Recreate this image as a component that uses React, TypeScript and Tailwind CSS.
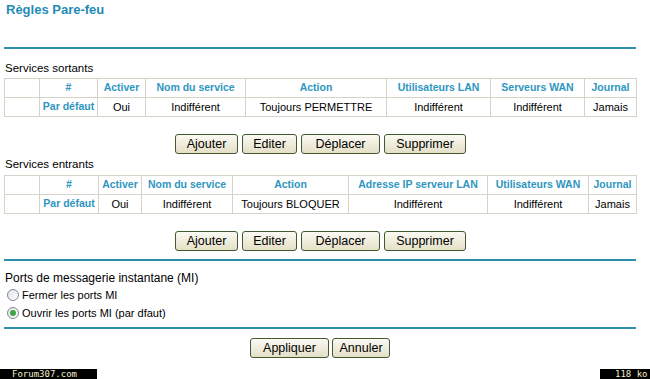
import React from "react"

const teal = "text-[#2e96bf]"

const Btn = ({ label, w }: { label: string; w: string }) => (
  <button
    className={`${w} h-[20px] rounded-[3px] border border-[#43592f] bg-gradient-to-b from-[#fbfaf3] to-[#e4dfc6] text-[12.5px] leading-[18px] text-black`}
  >
    {label}
  </button>
)

const ActionButtons = () => (
  <div className="flex justify-center gap-[4px] w-[632px] mx-[4px] pl-[1px]">
    <Btn label="Ajouter" w="w-[63px]" />
    <Btn label="Editer" w="w-[55px]" />
    <Btn label="Déplacer" w="w-[79px]" />
    <Btn label="Supprimer" w="w-[82px]" />
  </div>
)

type Col = { label: string; w: number }

const RuleTable = ({ cols, row }: { cols: Col[]; row: string[] }) => (
  <table className="mx-[4px] w-[632px] table-fixed border-collapse border border-[#d5d2c7] text-[11px]">
    <colgroup>
      {cols.map((c, i) => (
        <col key={i} style={{ width: c.w }} />
      ))}
    </colgroup>
    <tbody>
      <tr className="h-[19px]">
        {cols.map((c, i) => (
          <td
            key={i}
            className={`border border-[#d5d2c7] text-center font-bold text-[10.5px] whitespace-nowrap p-0 ${teal}`}
          >
            {c.label}
          </td>
        ))}
      </tr>
      <tr className="h-[19px]">
        {row.map((v, i) => (
          <td
            key={i}
            className={`border border-[#d5d2c7] text-center whitespace-nowrap p-0 ${
              i === 1 ? `font-bold text-[10.5px] ${teal}` : "text-black"
            }`}
          >
            {v}
          </td>
        ))}
      </tr>
    </tbody>
  </table>
)

const Radio = ({ checked, label }: { checked?: boolean; label: string }) => (
  <div className="flex items-center h-[18px] pl-[7px] gap-[3px] text-[11px]">
    <span className="w-[12px] h-[12px] rounded-full border border-[#7d8a96] bg-gradient-to-br from-[#dfe3e6] to-white flex items-center justify-center">
      {checked && <span className="w-[6px] h-[6px] rounded-full bg-[#3da53d]" />}
    </span>
    <span>{label}</span>
  </div>
)

const Rule = () => <div className="mx-[4px] w-[632px] h-[2px] bg-[#2a8daa]" />

export default function App() {
  const out: Col[] = [
    { label: "", w: 35 },
    { label: "#", w: 58 },
    { label: "Activer", w: 48 },
    { label: "Nom du service", w: 100 },
    { label: "Action", w: 141 },
    { label: "Utilisateurs LAN", w: 104 },
    { label: "Serveurs WAN", w: 94 },
    { label: "Journal", w: 52 },
  ]
  const inc: Col[] = [
    { label: "", w: 35 },
    { label: "#", w: 59 },
    { label: "Activer", w: 43 },
    { label: "Nom du service", w: 91 },
    { label: "Action", w: 116 },
    { label: "Adresse IP serveur LAN", w: 139 },
    { label: "Utilisateurs WAN", w: 101 },
    { label: "Journal", w: 48 },
  ]

  return (
    <div className="w-[650px] h-[379px] bg-white overflow-hidden font-['Liberation_Sans',Arial,sans-serif] text-black flex flex-col">
      <div className="h-[47px] pl-[6px] pt-[2px] text-[13px] leading-[16px] font-bold text-[#1f8cb6]">
        Règles Pare-feu
      </div>
      <Rule />

      <div className="h-[29px] pl-[5px] pt-[12px] text-[11.5px] leading-[14px]">Services sortants</div>
      <RuleTable
        cols={out}
        row={["", "Par défaut", "Oui", "Indifférent", "Toujours PERMETTRE", "Indifférent", "Indifférent", "Jamais"]}
      />

      <div className="h-[17px]" />
      <ActionButtons />

      <div className="h-[21px] pl-[5px] pt-[3px] text-[11.5px] leading-[14px]">Services entrants</div>
      <RuleTable
        cols={inc}
        row={["", "Par défaut", "Oui", "Indifférent", "Toujours BLOQUER", "Indifférent", "Indifférent", "Jamais"]}
      />

      <div className="h-[17px]" />
      <ActionButtons />

      <div className="h-[8px]" />
      <Rule />
      <div className="h-[25px] pl-[5px] pt-[10px] text-[12px] leading-[14px]">
        Ports de messagerie instantane (MI)
      </div>
      <Radio label="Fermer les ports MI" />
      <Radio checked label="Ouvrir les ports MI (par dfaut)" />
      <div className="h-[5px]" />
      <Rule />

      <div className="h-[9px]" />
      <div className="flex justify-center gap-[3px] w-[632px] mx-[4px]">
        <Btn label="Appliquer" w="w-[79px]" />
        <Btn label="Annuler" w="w-[58px]" />
      </div>

      <div className="flex-1" />
      <div className="flex justify-between items-end h-[10px]">
        <span className="bg-black text-[#f4f0c8] font-['DejaVu_Sans_Mono',monospace] text-[9px] leading-[10px] w-[97px] pl-[12px]">
          Forum307.com
        </span>
        <span className="bg-black text-[#f4f0c8] font-['DejaVu_Sans_Mono',monospace] text-[9px] leading-[10px] w-[50px] pl-[15px]">
          118 ko
        </span>
      </div>
    </div>
  )
}
